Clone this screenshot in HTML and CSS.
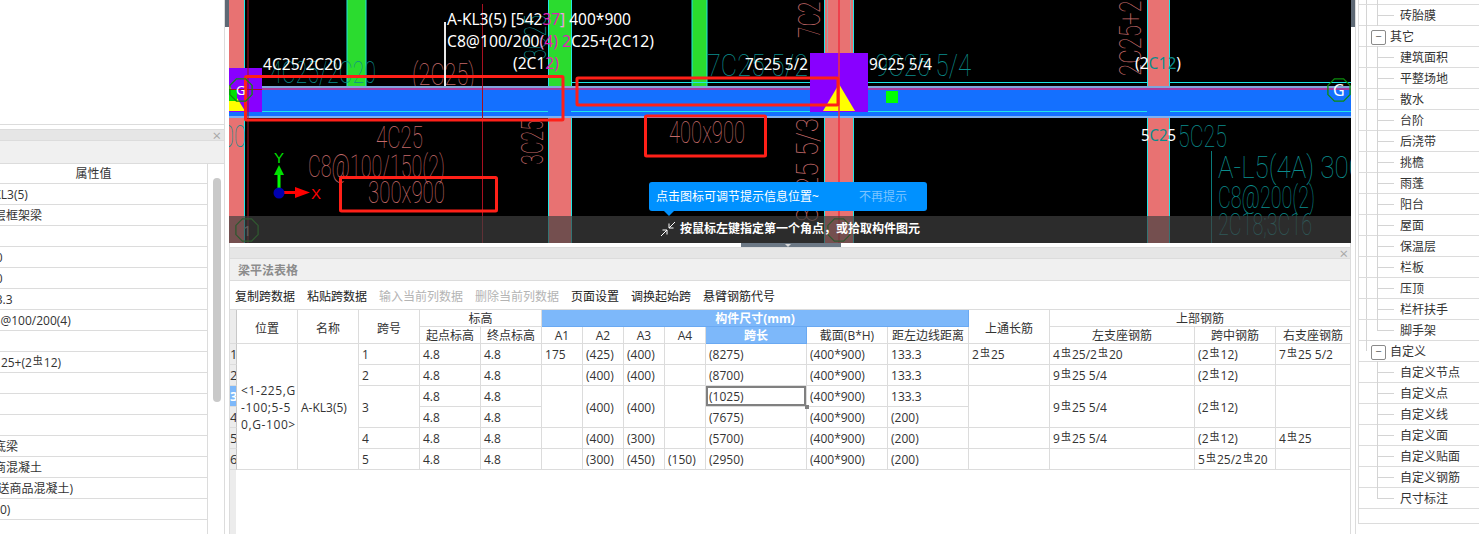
FILE: index.html
```html
<!DOCTYPE html>
<html lang="zh">
<head>
<meta charset="utf-8">
<title>梁平法表格</title>
<link rel="stylesheet" href="styles.css">
</head>
<body>
<div class="app">
  <aside class="props">
    <div class="props-blank"></div>
    <div class="dock-head"><span class="close">×</span></div>
    <div class="dock-title"></div>
    <div class="props-body">
      <div class="props-list">
        <div class="prow phead">属性值</div>
        <div class="prow">A-KL3(5)</div>
        <div class="prow">楼层框架梁</div>
        <div class="prow"></div>
        <div class="prow">300</div>
        <div class="prow">900</div>
        <div class="prow">133.3</div>
        <div class="prow pc8">C8@100/200(4)</div>
        <div class="prow"></div>
        <div class="prow">2<span class="bar">虫</span>25+(2<span class="bar">虫</span>12)</div>
        <div class="prow"></div>
        <div class="prow"></div>
        <div class="prow"></div>
        <div class="prow">层底梁</div>
        <div class="prow">预商混凝土</div>
        <div class="prow">(泵送商品混凝土)</div>
        <div class="prow">(C30)</div>
        <div class="prow"></div>
      </div>
      <div class="props-scroll"><div class="thumb"></div></div>
    </div>
  </aside>

  <div class="gutter"><div class="gutter-thumb"></div></div>

  <main class="centre">
    <section class="canvas">
      <svg class="cad" viewBox="229 0 1122 243" width="1122" height="243">
        <defs>
          <polygon id="oct" points="-4.6,-11.1 4.6,-11.1 11.1,-4.6 11.1,4.6 4.6,11.1 -4.6,11.1 -11.1,4.6 -11.1,-4.6"/>
        </defs>
        <rect x="229" y="0" width="1122" height="243" fill="#000"/>

        <!-- columns -->
        <rect class="col" x="229" y="0" width="15" height="243"/>
        <rect class="col" x="549" y="86" width="22" height="157"/>
        <rect class="col" x="825" y="0" width="28" height="243"/>
        <rect class="col" x="1147" y="0" width="23" height="243"/>
        <rect class="grn" x="347" y="0" width="19" height="88"/>
        <rect class="grn" x="549" y="0" width="22" height="88"/>
        <rect class="grn" x="692" y="0" width="15" height="88"/>
        <g class="cy">
          <line x1="244.5" y1="0" x2="244.5" y2="243"/>
          <line x1="347" y1="0" x2="347" y2="88"/><line x1="366" y1="0" x2="366" y2="88"/>
          <line x1="548.5" y1="0" x2="548.5" y2="243"/><line x1="571.5" y1="0" x2="571.5" y2="243"/>
          <line x1="692" y1="0" x2="692" y2="86"/><line x1="707" y1="0" x2="707" y2="86"/>
          <line x1="824.5" y1="0" x2="824.5" y2="243"/><line x1="853.5" y1="0" x2="853.5" y2="243"/>
          <line x1="1147.5" y1="0" x2="1147.5" y2="243"/><line x1="1169.5" y1="0" x2="1169.5" y2="243"/>
          <line x1="571" y1="82.5" x2="825" y2="82.5"/><line x1="854" y1="82.5" x2="1147" y2="82.5"/>
          <line x1="1170" y1="82.5" x2="1351" y2="82.5"/>
        </g>
        <rect x="827" y="0" width="1" height="52" fill="#a8a0a0"/>
        <rect x="850" y="0" width="1" height="52" fill="#a8a0a0"/>

        <!-- teal and red drawing text -->
        <g class="cad-t teal">
          <text x="270" y="83" textLength="106" lengthAdjust="spacingAndGlyphs">4C25/2C20</text>
          <text x="707" y="76" textLength="101" lengthAdjust="spacingAndGlyphs">7C25 5/2</text>
          <text x="875" y="76" textLength="96" lengthAdjust="spacingAndGlyphs">9C25 5/4</text>
          <text x="1178" y="147" textLength="49" lengthAdjust="spacingAndGlyphs">5C25</text>
          <text x="1218" y="178" textLength="145" lengthAdjust="spacingAndGlyphs">A-L5(4A) 300</text>
          <text x="1218" y="208" textLength="97" lengthAdjust="spacingAndGlyphs">C8@200(2)</text>
          <text x="1218" y="235" textLength="94" lengthAdjust="spacingAndGlyphs">2C18;3C16</text>
          <text x="222" y="147" textLength="24" lengthAdjust="spacingAndGlyphs">00</text>
          <text transform="translate(546 60) rotate(-90)" textLength="45" lengthAdjust="spacingAndGlyphs">3C25</text>
        </g>
        <g class="cad-t red">
          <text x="412" y="85" textLength="63" lengthAdjust="spacingAndGlyphs">(2C25)</text>
          <text x="376" y="148" textLength="47" lengthAdjust="spacingAndGlyphs">4C25</text>
          <text x="308" y="177" textLength="137" lengthAdjust="spacingAndGlyphs">C8@100/150(2)</text>
          <text x="368" y="203" textLength="77" lengthAdjust="spacingAndGlyphs">300x900</text>
          <text x="669" y="143" textLength="76" lengthAdjust="spacingAndGlyphs">400x900</text>
          <text transform="translate(543 165) rotate(-90)" textLength="45" lengthAdjust="spacingAndGlyphs">3C25</text>
          <text transform="translate(820 38) rotate(-90)" textLength="48" lengthAdjust="spacingAndGlyphs">7C25</text>
          <text transform="translate(818 222) rotate(-90)" textLength="104" lengthAdjust="spacingAndGlyphs">8C25 5/3</text>
          <text transform="translate(1141 76) rotate(-90)" textLength="90" lengthAdjust="spacingAndGlyphs">2C25+2C</text>
        </g>

        <!-- beam -->
        <rect x="229" y="87" width="1122" height="30" fill="#1470ff"/>
        <rect x="229" y="86" width="1122" height="2" fill="#7ea6dc"/>
        <rect x="229" y="88" width="1122" height="2" fill="#a63a9c"/>
        <rect x="229" y="116" width="1122" height="2" fill="#7fb0f0"/>
        <g class="cy">
          <line x1="262" y1="111.5" x2="548" y2="111.5"/>
          <line x1="571" y1="111.5" x2="810" y2="111.5"/>
          <line x1="868" y1="111.5" x2="1147" y2="111.5"/>
          <line x1="1170" y1="111.5" x2="1351" y2="111.5"/>
        </g>

        <!-- nodes -->
        <rect x="229" y="68" width="33" height="44" fill="#8800ff"/>
        <polygon points="229,85 229,111 245,111" fill="#ffff00"/>
        <rect x="229" y="90" width="8" height="11" fill="#00e000"/>
        <rect x="810" y="53" width="58" height="59" fill="#8800ff"/>
        <polygon points="839,84 823,111 855,111" fill="#ffff00"/>
        <rect x="886" y="91" width="12" height="12" fill="#00ff00"/>

        <!-- red guide lines -->
        <line class="guide" x1="248" y1="0" x2="248" y2="243"/>
        <line class="guide" x1="482.5" y1="4" x2="482.5" y2="243"/>
        <line class="guide bright" x1="839" y1="0" x2="839" y2="243"/>
        <line class="guide" x1="229" y1="89.5" x2="262" y2="89.5"/>
        <line x1="1211.5" y1="151" x2="1211.5" y2="243" stroke="#0a7a7a"/>

        <!-- annotation boxes -->
        <rect class="mark" x="245.5" y="76.5" width="317.5" height="43.5" rx="1"/>
        <rect class="mark" x="577" y="78" width="261" height="27" rx="1"/>
        <rect class="mark" x="645.5" y="116" width="120" height="40" rx="1"/>
        <rect class="mark" x="340.5" y="177.5" width="156" height="33.5" rx="1"/>

        <!-- white labels -->
        <line x1="445" y1="22" x2="445" y2="86" stroke="#e8e8e8" stroke-width="2"/>
        <g class="lbl">
          <text x="447" y="25" textLength="184" lengthAdjust="spacingAndGlyphs">A-KL3(5) [542<tspan class="mg">37</tspan><tspan class="pk">]</tspan> 400*900</text>
          <text x="447" y="47" textLength="207" lengthAdjust="spacingAndGlyphs">C8@100/200<tspan class="pk">(</tspan><tspan class="mg">4) 2</tspan>C25+(2C12)</text>
          <text x="513" y="69" textLength="46" lengthAdjust="spacingAndGlyphs">(2C1<tspan class="mg">2)</tspan></text>
          <text x="263" y="70" textLength="79" lengthAdjust="spacingAndGlyphs">4C25/2C20</text>
          <text x="745" y="70" textLength="63" lengthAdjust="spacingAndGlyphs">7C25 5/2</text>
          <text x="869" y="70" textLength="63" lengthAdjust="spacingAndGlyphs">9C25 5/4</text>
          <text x="1135" y="69" textLength="46" lengthAdjust="spacingAndGlyphs">(2<tspan class="tl">C12</tspan>)</text>
          <text x="1141" y="141" textLength="35" lengthAdjust="spacingAndGlyphs">5<tspan class="tl">C2</tspan>5</text>
        </g>

        <!-- axis octagons -->
        <text class="axis-s" x="236" y="95">G</text>
        <use href="#oct" class="oct" x="241" y="90"/>
        <use href="#oct" class="oct" x="1339" y="90"/>
        <text class="axis-t" x="1333" y="96">G</text>
        <use href="#oct" class="oct" x="839" y="230"/>
        <use href="#oct" class="oct" x="247" y="230"/>
        <text class="axis-n" x="243" y="236">1</text>

        <!-- coordinate gizmo -->
        <rect x="277.5" y="174" width="3" height="19" fill="#00ff00"/>
        <polygon points="279,165 274,175 284,175" fill="#00e000"/>
        <rect x="281" y="191" width="15" height="3" fill="#ff0000"/>
        <polygon points="310,192.5 295,187 295,198" fill="#ff0000"/>
        <circle cx="279" cy="193" r="5.5" fill="#0000b0"/>
        <text class="gizmo" x="274" y="163" fill="#00e000">Y</text>
        <text class="gizmo" x="311" y="199" fill="#ff0000">X</text>

        <!-- status bar backdrop -->
        <rect x="229" y="216" width="1122" height="27" fill="rgba(64,64,64,.69)"/>
      </svg>

      <div class="tip">
        <span class="tip-msg">点击图标可调节提示信息位置~</span>
        <span class="tip-off">不再提示</span>
      </div>
      <div class="status">
        <svg class="status-ico" viewBox="0 0 16 16" width="16" height="16">
          <path d="M1 15 L7 9 M7 9 V13.5 M7 9 H2.5 M15 1 L9 7 M9 7 V2.5 M9 7 H13.5" fill="none" stroke="#fff" stroke-width="1"/>
        </svg>
        <span>按鼠标左键指定第一个角点，或拾取构件图元</span>
      </div>
    </section>

    <section class="sheet">
      <div class="handle"></div>
      <div class="dock-head sheet-head"><span class="close">×</span></div>
      <div class="sheet-title">梁平法表格</div>
      <div class="toolbar">
        <span>复制跨数据</span>
        <span>粘贴跨数据</span>
        <span class="off">输入当前列数据</span>
        <span class="off">删除当前列数据</span>
        <span>页面设置</span>
        <span>调换起始跨</span>
        <span>悬臂钢筋代号</span>
      </div>
      <div class="grid-wrap">
        <table class="grid">
          <colgroup>
            <col class="c8"><col class="c61"><col class="c61"><col class="c61"><col class="c61"><col class="c61">
            <col class="c41"><col class="c41"><col class="c41"><col class="c41">
            <col class="c101"><col class="c81"><col class="c81"><col class="c81">
            <col class="c145"><col class="c81"><col class="c75">
          </colgroup>
          <thead>
            <tr>
              <th class="rn" rowspan="2"></th>
              <th class="tall" rowspan="2">位置</th>
              <th class="tall" rowspan="2">名称</th>
              <th class="tall" rowspan="2">跨号</th>
              <th colspan="2">标高</th>
              <th colspan="7" class="hl">构件尺寸(mm)</th>
              <th class="tall" rowspan="2">上通长筋</th>
              <th colspan="3">上部钢筋</th>
            </tr>
            <tr>
              <th>起点标高</th><th>终点标高</th>
              <th>A1</th><th>A2</th><th>A3</th><th>A4</th>
              <th class="hl">跨长</th><th>截面(B*H)</th><th>距左边线距离</th>
              <th>左支座钢筋</th><th>跨中钢筋</th><th>右支座钢筋</th>
            </tr>
          </thead>
          <tbody>
            <tr>
              <td class="rn">1</td>
              <td rowspan="6" class="pos">&lt;1-225,G<br>-100;5-5<br>0,G-100&gt;</td>
              <td rowspan="6">A-KL3(5)</td>
              <td>1</td><td>4.8</td><td>4.8</td>
              <td>175</td><td>(425)</td><td>(400)</td><td></td>
              <td>(8275)</td><td>(400*900)</td><td>133.3</td>
              <td>2<span class="bar">虫</span>25</td>
              <td>4<span class="bar">虫</span>25/2<span class="bar">虫</span>20</td>
              <td>(2<span class="bar">虫</span>12)</td>
              <td>7<span class="bar">虫</span>25 5/2</td>
            </tr>
            <tr>
              <td class="rn">2</td>
              <td>2</td><td>4.8</td><td>4.8</td>
              <td></td><td>(400)</td><td>(400)</td><td></td>
              <td>(8700)</td><td>(400*900)</td><td>133.3</td>
              <td></td>
              <td>9<span class="bar">虫</span>25 5/4</td>
              <td>(2<span class="bar">虫</span>12)</td>
              <td></td>
            </tr>
            <tr>
              <td class="rn rn-on">3</td>
              <td rowspan="2">3</td><td>4.8</td><td>4.8</td>
              <td rowspan="2"></td><td rowspan="2">(400)</td><td rowspan="2">(400)</td><td rowspan="2"></td>
              <td class="cur">(1025)</td><td>(400*900)</td><td>133.3</td>
              <td rowspan="2"></td>
              <td rowspan="2">9<span class="bar">虫</span>25 5/4</td>
              <td rowspan="2">(2<span class="bar">虫</span>12)</td>
              <td rowspan="2"></td>
            </tr>
            <tr>
              <td class="rn">4</td>
              <td>4.8</td><td>4.8</td>
              <td>(7675)</td><td>(400*900)</td><td>(200)</td>
            </tr>
            <tr>
              <td class="rn">5</td>
              <td>4</td><td>4.8</td><td>4.8</td>
              <td></td><td>(400)</td><td>(300)</td><td></td>
              <td>(5700)</td><td>(400*900)</td><td>(200)</td>
              <td></td>
              <td>9<span class="bar">虫</span>25 5/4</td>
              <td>(2<span class="bar">虫</span>12)</td>
              <td>4<span class="bar">虫</span>25</td>
            </tr>
            <tr>
              <td class="rn">6</td>
              <td>5</td><td>4.8</td><td>4.8</td>
              <td></td><td>(300)</td><td>(450)</td><td>(150)</td>
              <td>(2950)</td><td>(400*900)</td><td>(200)</td>
              <td></td>
              <td></td>
              <td>5<span class="bar">虫</span>25/2<span class="bar">虫</span>20</td>
              <td></td>
            </tr>
          </tbody>
        </table>
      </div>
    </section>
  </main>

  <div class="gutter gutter-r"><div class="gutter-thumb"></div></div>

  <aside class="tree">
    <div class="node stub cont"></div>
    <div class="node leaf cont">砖胎膜</div>
    <div class="node group">其它</div>
    <div class="node leaf cont">建筑面积</div>
    <div class="node leaf cont">平整场地</div>
    <div class="node leaf cont">散水</div>
    <div class="node leaf cont">台阶</div>
    <div class="node leaf cont">后浇带</div>
    <div class="node leaf cont">挑檐</div>
    <div class="node leaf cont">雨蓬</div>
    <div class="node leaf cont">阳台</div>
    <div class="node leaf cont">屋面</div>
    <div class="node leaf cont">保温层</div>
    <div class="node leaf cont">栏板</div>
    <div class="node leaf cont">压顶</div>
    <div class="node leaf cont">栏杆扶手</div>
    <div class="node leaf last cont">脚手架</div>
    <div class="node group group-end">自定义</div>
    <div class="node leaf">自定义节点</div>
    <div class="node leaf">自定义点</div>
    <div class="node leaf">自定义线</div>
    <div class="node leaf">自定义面</div>
    <div class="node leaf">自定义贴面</div>
    <div class="node leaf">自定义钢筋</div>
    <div class="node leaf last">尺寸标注</div>
    <div class="node tail"></div>
  </aside>
</div>
</body>
</html>
```

FILE: styles.css
```css
* { box-sizing: border-box; }
html, body { margin: 0; height: 100%; overflow: hidden; background: #fff; }
body {
  font: 12px/20px "Open Sans", "Noto Sans CJK SC", sans-serif;
  color: #333;
}
.app { display: flex; width: 1479px; height: 534px; }

/* left property dock */
.props { width: 225px; height: 534px; display: flex; flex-direction: column; border-right: 1px solid #dcdcdc; overflow: hidden; }
.props-blank { height: 129px; background: linear-gradient(#fff 124px, #dcdcdc 124px, #dcdcdc 125px, #fff 125px); }
.dock-head { height: 12px; background: #e6e6e6; border-top: 1px solid #dcdcdc; border-bottom: 1px solid #dcdcdc; display: flex; justify-content: flex-end; align-items: center; padding-right: 3px; }
.close { color: #a8a8a8; font-size: 15px; line-height: 10px; }
.dock-title { height: 23px; background: #f0f0f0; border-bottom: 1px solid #dcdcdc; }
.props-body { flex: 1; display: flex; min-height: 0; }
.props-list { width: 208px; border-right: 1px solid #dcdcdc; overflow: hidden; }
.prow { height: 21px; border-bottom: 1px solid #dcdcdc; padding-top: 1px; text-indent: -18px; white-space: nowrap; }
.phead { height: 20px; text-align: center; text-indent: 0; padding: 0 20px 0 0; }
.pc8 { text-indent: -14px; }
.props-scroll { flex: 1; padding: 14px 3px 0 5px; }
.thumb { height: 224px; background: #c9c9c9; border-radius: 4px; }

/* thin dark gutter bars */
.gutter { width: 4px; height: 534px; background: #fff; }
.gutter-thumb { height: 27px; background: #5e6975; }
.gutter-r { border-right: 1px solid #dcdcdc; width: 5px; }

/* centre */
.centre { width: 1122px; height: 534px; display: flex; flex-direction: column; }
.canvas { position: relative; height: 243px; background: #000; overflow: hidden; }
.cad { display: block; }
.col { fill: #e87272; }
.grn { fill: #2bdb2f; }
.cy line { stroke: #1fe6e6; stroke-width: 1; }
.cad-t text { font-family: Roboto, "Liberation Sans", sans-serif; font-weight: 100; font-size: 32px; }
.teal text { fill: #0b8c8c; }
.red text { fill: #c46a6a; }
.guide { stroke: #a81020; stroke-width: 1; }
.bright { stroke: #f03040; stroke-width: 1.5; }
.mark { fill: none; stroke: #ff2018; stroke-width: 3; }
.lbl text { font-family: "Noto Sans", sans-serif; font-size: 15.5px; fill: #fff; }
.lbl .mg { fill: #e020b8; }
.lbl .pk { fill: #f0a0e0; }
.lbl .tl { fill: #0b8c8c; }
.oct { fill: none; stroke: #0c8c0c; stroke-width: 1.3; }
.axis-t { font: 16px "Noto Sans", sans-serif; fill: #fff; }
.axis-s { font: 13px "Noto Sans", sans-serif; fill: #fff; }
.axis-n { font: 15px "Noto Sans", sans-serif; fill: #999; }
.gizmo { font: 15px "Liberation Sans", sans-serif; }

.tip { position: absolute; left: 420px; top: 182px; width: 278px; height: 29px; background: #0091ff; border-radius: 3px; color: #fff; font-size: 12px; line-height: 30px; padding-left: 7px; }
.tip::after { content: ""; position: absolute; left: 15px; top: 29px; border: 5px solid transparent; border-top-color: #0091ff; border-bottom-width: 0; }
.tip-off { position: absolute; left: 210px; color: #7cc4ff; }
.status { position: absolute; left: 431px; top: 221px; display: flex; align-items: center; gap: 4px; height: 16px; color: #fff; font-weight: 700; font-size: 12px; white-space: nowrap; }

/* beam table dock */
.sheet { position: relative; flex: 1; min-height: 0; display: flex; flex-direction: column; padding-top: 4px; border-left: 1px solid #dcdcdc; border-right: 1px solid #dcdcdc; }
.handle { position: absolute; left: 511px; top: 0; width: 100px; height: 4px; background: #6c7885; }
.handle::after { content: ""; position: absolute; left: 44px; top: 1px; border: 3px solid transparent; border-top-color: #d8d8d8; border-bottom-width: 0; }
.sheet-head { padding-right: 2px; }
.sheet-title { height: 22px; background: #f0f0f0; border-bottom: 1px solid #dcdcdc; color: #8c8c8c; font-weight: 700; line-height: 21px; padding: 1px 0 0 8px; }
.toolbar { height: 28px; display: flex; gap: 12px; align-items: center; padding: 3px 0 0 5px; color: #222; }
.off { color: #b4b4b4; }
.grid-wrap { flex: 1; min-height: 0; overflow: hidden; background: linear-gradient(#ececec, #ececec) 0 0 / 6px 100% no-repeat; }
.grid { table-layout: fixed; border-collapse: separate; border-spacing: 0; width: 1121px; border-top: 1px solid #dcdcdc; margin-left: -1px; }
.c8 { width: 8px; } .c61 { width: 61px; } .c41 { width: 41px; } .c101 { width: 101px; }
.c81 { width: 81px; } .c145 { width: 145px; } .c75 { width: 75px; }
.grid th, .grid td { padding: 0 0 0 3px; border-right: 1px solid #dcdcdc; border-bottom: 1px solid #dcdcdc; font-weight: 400; white-space: nowrap; overflow: hidden; }
.grid th { height: 17px; line-height: 15px; padding: 1px 0 0; text-align: center; }
.grid .tall { padding-top: 3px; }
.grid td { height: 21px; line-height: 19px; padding-top: 1px; }
.grid .hl { background: #7db8fa; color: #fff; font-weight: 700; border-right-color: #6aa9f2; border-bottom-color: #6aa9f2; }
.grid .rn { background: #ececec; padding-left: 1px; text-align: left; font-size: 13px; border-right-color: #c8c8c8; }
.grid .rn-on { background: #7db8fa; color: #fff; font-weight: 700; }
.grid .pos { line-height: 17px; padding-left: 4px; letter-spacing: .6px; }
.grid .cur { position: relative; overflow: visible; box-shadow: inset 0 0 0 2px #808080; }
.grid .cur::after { content: ""; position: absolute; right: -3px; bottom: -3px; width: 4px; height: 4px; background: #808080; }
.bar { display: inline-block; width: 12px; font-size: 10px; line-height: 0; text-align: center; vertical-align: 3px; text-indent: 0; }

/* right tree */
.tree { flex: 1; height: 534px; padding-left: 2px; overflow: hidden; }
.node { position: relative; height: 21px; padding: 1px 0 0 41px; border-bottom: 1px solid #dcdcdc; border-left: 1px solid #dcdcdc; white-space: nowrap; line-height: 19px; }
.cont { background: linear-gradient(#d4d4d4, #d4d4d4) 7px 0 / 1px 100% no-repeat; }
.stub { height: 5px; padding: 0; }
.stub::before { content: ""; position: absolute; left: 18px; top: 0; bottom: -1px; width: 1px; background: #d4d4d4; }
.tail { height: 15px; }
.leaf::before { content: ""; position: absolute; left: 18px; top: -1px; height: 22px; width: 1px; background: #d4d4d4; }
.leaf::after { content: ""; position: absolute; left: 19px; top: 10px; width: 16px; height: 1px; background: #d4d4d4; }
.last::before { height: 12px; }
.group { padding-left: 31px; }
.group::before { content: "−"; position: absolute; left: 12px; top: 4px; width: 13px; height: 13px; border: 1px solid #8a8a8a; border-radius: 2px; background: #fff; text-align: center; line-height: 10px; font-size: 11px; color: #555; z-index: 1; }
.group::after { content: ""; position: absolute; left: 7px; top: -1px; width: 1px; height: 22px; background: #d4d4d4; }
.group-end::after { height: 11px; }
```
